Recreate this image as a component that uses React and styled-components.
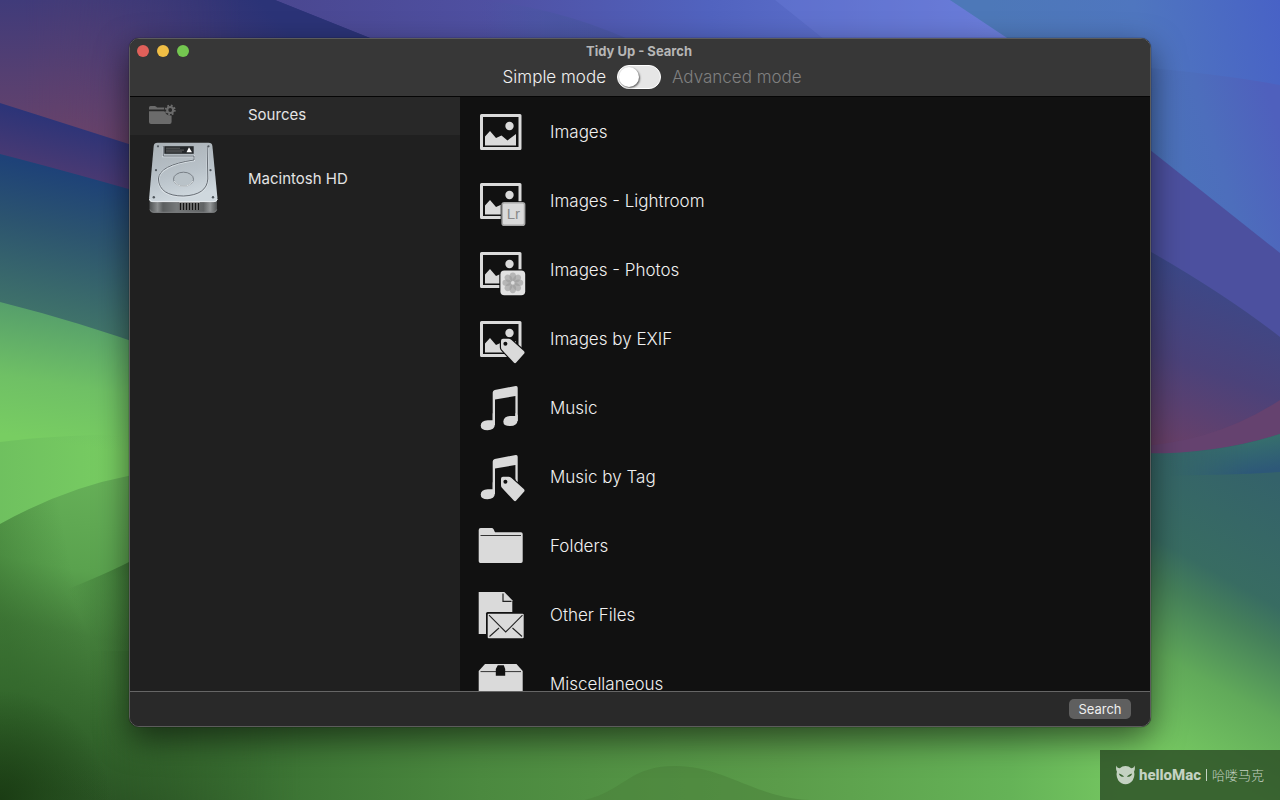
import { useState } from "react";
import styled, { createGlobalStyle } from "styled-components";

const categories = [
  { name: "Images", Icon: ImageIcon },
  { name: "Images - Lightroom", Icon: LightroomIcon },
  { name: "Images - Photos", Icon: PhotosIcon },
  { name: "Images by EXIF", Icon: ExifIcon },
  { name: "Music", Icon: MusicIcon },
  { name: "Music by Tag", Icon: MusicTagIcon },
  { name: "Folders", Icon: FolderIcon },
  { name: "Other Files", Icon: OtherFilesIcon },
  { name: "Miscellaneous", Icon: BoxIcon },
];

const App = () => {
  const [advanced, setAdvanced] = useState(false);
  return (
    <>
      <GlobalStyle />
      <Desktop>
        <Wallpaper />
        <Window>
          <TitleBar>
            <Lights>
              <Light $color="#e0605a" aria-label="Close" />
              <Light $color="#f0be45" aria-label="Minimize" />
              <Light $color="#74c750" aria-label="Zoom" />
            </Lights>
            <Title>Tidy Up - Search</Title>
            <ModeBar>
              <ModeLabel htmlFor="mode" $active={!advanced} $end>
                Simple mode
              </ModeLabel>
              <Switch
                id="mode"
                type="checkbox"
                role="switch"
                checked={advanced}
                onChange={(e) => setAdvanced(e.target.checked)}
              />
              <ModeLabel htmlFor="mode" $active={advanced}>
                Advanced mode
              </ModeLabel>
            </ModeBar>
          </TitleBar>
          <Content>
            <Sidebar>
              <SidebarHeader>
                <FolderGearIcon />
                <h2>Sources</h2>
              </SidebarHeader>
              <Source>
                <DriveIcon />
                <span>Macintosh HD</span>
              </Source>
            </Sidebar>
            <CategoryList>
              {categories.map(({ name, Icon }) => (
                <Category key={name}>
                  <Icon />
                  <span>{name}</span>
                </Category>
              ))}
            </CategoryList>
          </Content>
          <Footer>
            <SearchButton type="button">Search</SearchButton>
          </Footer>
        </Window>
        <Watermark>
          <MaskLogo />
          <Brand>helloMac</Brand>
          <Divider />
          <BrandCn lang="zh-CN">哈喽马克</BrandCn>
        </Watermark>
      </Desktop>
    </>
  );
};

function Glyph({ children }) {
  return (
    <GlyphSvg viewBox="0 0 49 49" aria-hidden="true">
      {children}
    </GlyphSvg>
  );
}

function Picture() {
  return (
    <>
      <rect x="3.5" y="8.5" width="38.5" height="33" fill="none" stroke="#dadada" strokeWidth="3" strokeLinejoin="round" />
      <circle cx="31.5" cy="19" r="4.2" />
      <path d="M7 38.5V29.5L12 24L18 31L23.5 28.5L29.5 33.5L38 27V38.5Z" />
    </>
  );
}

function Tag() {
  return (
    <>
      <path
        d="M25 24.7H30.5Q32 24.7 33.2 25.8L45.8 37Q47.2 38.3 46 39.7L38.2 48.6Q37 49.8 35.8 48.5L23.9 35.8Q23 34.8 23 33.3V26.7Q23 24.7 25 24.7Z"
        stroke="#111"
        strokeWidth="2.4"
        paintOrder="stroke"
      />
      <circle cx="27.4" cy="29.8" r="2" fill="#111" />
    </>
  );
}

function Notes() {
  return (
    <>
      <path d="M14.7 9.5Q14.7 7.5 16.7 7L37.7 3Q39.7 2.7 39.7 4.7V38H37.4V13L17 16.6V42H14.7Z" />
      <path d="M17 36V41Q16.6 47.2 9.5 47.2Q2.7 47 2.7 42.4Q3 37.5 9.7 37.2H14.7V30Z" />
      <path d="M39.7 32V37Q39.3 43 32 43Q25.3 43 25.3 38.4Q25.8 33.3 32.3 33H37.4V30Z" />
    </>
  );
}

function ImageIcon() {
  return (
    <Glyph>
      <Picture />
    </Glyph>
  );
}

function LightroomIcon() {
  return (
    <Glyph>
      <Picture />
      <rect x="22.7" y="25.3" width="25.6" height="25.6" rx="3" fill="#111" />
      <rect x="24.2" y="26.8" width="22.4" height="22.4" rx="2" stroke="#a6a6a6" strokeWidth="1.6" />
      <text x="35.4" y="43.4" textAnchor="middle" fontFamily="'Liberation Sans', sans-serif" fontSize="15" fill="#8a8a8a">
        Lr
      </text>
    </Glyph>
  );
}

function PhotosIcon() {
  return (
    <Glyph>
      <Picture />
      <rect x="21.3" y="24.3" width="27" height="27" rx="4.5" fill="#111" />
      <rect x="22.4" y="25.4" width="24.8" height="24.8" rx="4" fill="#e2e2e2" />
      {[0, 45, 90, 135, 180, 225, 270, 315].map((angle) => (
        <ellipse
          key={angle}
          cx="34.8"
          cy="31.8"
          rx="3.3"
          ry="4.4"
          fill="#999"
          fillOpacity="0.6"
          transform={`rotate(${angle} 34.8 37.8)`}
        />
      ))}
      <circle cx="34.8" cy="37.8" r="1.2" fill="#ddd" />
    </Glyph>
  );
}

function ExifIcon() {
  return (
    <Glyph>
      <Picture />
      <Tag />
    </Glyph>
  );
}

function MusicIcon() {
  return (
    <Glyph>
      <Notes />
    </Glyph>
  );
}

function MusicTagIcon() {
  return (
    <Glyph>
      <Notes />
      <rect x="21.8" y="27" width="15.6" height="18" fill="#111" />
      <Tag />
    </Glyph>
  );
}

function FolderIcon() {
  return (
    <Glyph>
      <path d="M.7 9Q.7 7 2.7 7H13.6Q15 7 15.6 8.2L17 11.2H43Q44.7 11.2 44.7 13V40.3Q44.7 42 43 42H2.4Q.7 42 .7 40.3Z" />
      <path d="M2.5 14.5H43" stroke="#333" />
    </Glyph>
  );
}

function OtherFilesIcon() {
  return (
    <Glyph>
      <path d="M.7 2H26.3L34.3 10.2V44H.7Z" />
      <path d="M25 3.5V11.4H33.5" fill="none" stroke="#222" strokeWidth="1.2" />
      <rect x="8" y="22" width="39" height="28" rx="1.5" fill="#111" />
      <rect x="9.7" y="23.7" width="36" height="24.5" rx="1" />
      <path d="M11 25.2L27.7 42L44.5 25.2M11.5 46.5L21 38M44 46.5L34.5 38" fill="none" stroke="#222" strokeWidth="1.1" />
    </Glyph>
  );
}

function BoxIcon() {
  return (
    <Glyph>
      <path d="M7 5H38.5L44.7 12V45H.7V12Z" />
      <path d="M2.5 12.6H43" stroke="#333" />
      <path d="M19.8 6.2H25.8L27.2 10V16.7H17.8V10Z" fill="#111" />
    </Glyph>
  );
}

function FolderGearIcon() {
  return (
    <svg width="28" height="22" viewBox="0 0 28 22" aria-hidden="true">
      <g fill="#6b6b6b">
        <path d="M1 5.5V3.5Q1 2 2.5 2H6.5Q7.6 2 8.4 2.8L9 3.5H16.4Q16 4.5 16 5.5Z" />
        <path d="M1 7.2H16.4Q18 11.6 23.6 11.4V18Q23.6 20 21.6 20H3Q1 20 1 18Z" />
      </g>
      <circle cx="22.2" cy="6" r="3" fill="none" stroke="#6b6b6b" strokeWidth="2.2" />
      <circle cx="22.2" cy="6" r="4.5" fill="none" stroke="#6b6b6b" strokeWidth="2" strokeDasharray="1.77 1.77" />
    </svg>
  );
}

function DriveIcon() {
  return (
    <svg width="70" height="74" viewBox="0 0 70 74" aria-hidden="true">
      <defs>
        <linearGradient id="plate" x1="0" y1="0" x2="0.3" y2="1">
          <stop offset="0" stopColor="#a9b0b5" />
          <stop offset="0.6" stopColor="#b9c2c9" />
          <stop offset="1" stopColor="#cfd8de" />
        </linearGradient>
        <linearGradient id="base" x1="0" x2="1">
          <stop offset="0" stopColor="#4d5051" />
          <stop offset="0.12" stopColor="#8b8e8f" />
          <stop offset="0.2" stopColor="#5a5d5e" />
          <stop offset="0.4" stopColor="#757879" />
          <stop offset="0.8" stopColor="#606364" />
          <stop offset="0.9" stopColor="#939697" />
          <stop offset="1" stopColor="#4d5051" />
        </linearGradient>
      </defs>
      <path d="M1.5 57H69V66.5Q69 70.8 65 70.8H5.5Q1.5 70.8 1.5 66.5Z" fill="url(#base)" />
      <path d="M2 67.5Q3 70.3 6 70.3H64.5Q68 70.3 68.7 67.5" fill="none" stroke="#7c7f80" />
      <path d="M31 60H52V68H31Z" fill="#959696" />
      <path d="M32.5 61V68M35.5 61V68M38.5 61V68M41.5 61V68M44.5 61V68M47.5 61V68M50.5 61V68" stroke="#141414" strokeWidth="1.7" />
      <path
        d="M9.5 .8H60.5Q64 .8 64.4 4L69.4 55.5Q69.8 60 66 60H4.5Q.9 60 1.2 55.5L5.7 4Q6 .8 9.5 .8Z"
        fill="url(#plate)"
      />
      <path d="M1.4 57Q2 59.6 4.6 59.6H66Q69 59.4 69.3 57" fill="none" stroke="#e6ebee" />
      <path
        d="M15.3 4.5V14.3H46V18.2Q11 23.5 10.4 37.5Q11.5 54.7 35.5 54.7Q58.8 53.5 59.8 38L59.2 4"
        fill="none"
        stroke="#d9e0e5"
        strokeWidth="2"
      />
      <path
        d="M15.3 4V14H46V18Q11 23 10.4 37Q11.5 54 35.5 54Q58.8 53 59.8 37L59.2 4"
        fill="none"
        stroke="#596068"
        strokeWidth="0.9"
      />
      <ellipse cx="35.5" cy="37.2" rx="10" ry="7" fill="#b9c2c8" stroke="#70777e" strokeWidth="0.9" />
      <path d="M26 39Q29 44.3 35.5 44.2Q42 44.1 45 39" fill="none" stroke="#edf1f3" strokeWidth="0.8" />
      <rect x="16.3" y="4.2" width="29.4" height="7.6" fill="#24272a" />
      <path d="M18 6.2H32M18 8.1H36M18 9.9H34" stroke="#777" strokeWidth="0.7" />
      <path d="M38.5 10.3L41 5.3L44 10.3Z" fill="#fff" />
      <g fill="#50575d">
        <circle cx="10" cy="4.3" r="1.1" />
        <circle cx="60.5" cy="4.3" r="1.1" />
        <circle cx="8" cy="28.2" r="1.1" />
        <circle cx="62.5" cy="28.2" r="1.1" />
        <circle cx="5.8" cy="55.2" r="1.2" />
        <circle cx="65" cy="55.2" r="1.2" />
      </g>
    </svg>
  );
}

function MaskLogo() {
  return (
    <svg width="20" height="20" viewBox="0 0 20 20" aria-hidden="true">
      <path
        d="M.5 0Q.8 2.6 4 2.8Q6.5.4 10 .4Q13.5.4 16 2.8Q19.2 2.6 19.5 0Q20.6 3.8 19 6.5Q20.3 11 17.7 15.5Q14.5 19.8 10 19.8Q5.5 19.8 2.3 15.5Q-.3 11 1 6.5Q-.6 3.8 .5 0ZM3 8.3Q3.8 12 8.4 11.9Q8 10 3 8.3ZM17 8.3Q12 10 11.6 11.9Q16.2 12 17 8.3Z"
        fill="#c4d2c2"
        fillRule="evenodd"
      />
    </svg>
  );
}

function Wallpaper() {
  return (
    <Backdrop viewBox="0 0 1280 800" preserveAspectRatio="none" aria-hidden="true">
      <defs>
        <linearGradient id="sky" gradientUnits="userSpaceOnUse" x1="275" y1="0" x2="1000" y2="0">
          <stop offset="0" stopColor="#4a4790" />
          <stop offset="0.3" stopColor="#4f50a2" />
          <stop offset="0.6" stopColor="#5163bf" />
          <stop offset="1" stopColor="#687bd8" />
        </linearGradient>
        <linearGradient id="haze" gradientUnits="userSpaceOnUse" x1="480" y1="0" x2="560" y2="0">
          <stop offset="0" stopColor="#4856a0" stopOpacity="0" />
          <stop offset="1" stopColor="#4856a0" stopOpacity="0.6" />
        </linearGradient>
        <linearGradient id="skyRight" gradientUnits="userSpaceOnUse" x1="1000" y1="60" x2="1280" y2="0">
          <stop offset="0" stopColor="#4d78b8" />
          <stop offset="0.5" stopColor="#4f76bf" />
          <stop offset="1" stopColor="#4862c6" />
        </linearGradient>
        <linearGradient id="skyLow" gradientUnits="userSpaceOnUse" x1="1150" y1="170" x2="1280" y2="130">
          <stop offset="0" stopColor="#4b74ba" />
          <stop offset="0.5" stopColor="#4d6ebc" />
          <stop offset="1" stopColor="#4f60bd" />
        </linearGradient>
        <linearGradient id="dusk" gradientUnits="userSpaceOnUse" x1="250" y1="-10" x2="90" y2="140">
          <stop offset="0" stopColor="#2b3377" />
          <stop offset="0.45" stopColor="#403975" />
          <stop offset="1" stopColor="#6b4268" />
        </linearGradient>
        <linearGradient id="duskLeft" x1="0" y1="0" x2="0" y2="1">
          <stop offset="0" stopColor="#403b7a" />
          <stop offset="1" stopColor="#6d4468" />
        </linearGradient>
        <linearGradient id="fade" x1="0" x2="1">
          <stop offset="0.1" stopColor="#fff" />
          <stop offset="1" stopColor="#000" />
        </linearGradient>
        <mask id="leftMask">
          <rect width="240" height="160" fill="url(#fade)" />
        </mask>
        <linearGradient id="hillFade" gradientUnits="userSpaceOnUse" x1="90" y1="0" x2="300" y2="0">
          <stop offset="0" stopColor="#fff" />
          <stop offset="1" stopColor="#000" />
        </linearGradient>
        <mask id="hillMask">
          <rect width="420" height="800" fill="url(#hillFade)" />
        </mask>
        <linearGradient id="violet" gradientUnits="userSpaceOnUse" x1="30" y1="112" x2="12" y2="190">
          <stop offset="0" stopColor="#2c3478" />
          <stop offset="1" stopColor="#5a3d70" />
        </linearGradient>
        <linearGradient id="lake" gradientUnits="userSpaceOnUse" x1="60" y1="170" x2="30" y2="315">
          <stop offset="0" stopColor="#1e4278" />
          <stop offset="0.4" stopColor="#2c546f" />
          <stop offset="1" stopColor="#40736a" />
        </linearGradient>
        <linearGradient id="meadow" gradientUnits="userSpaceOnUse" x1="60" y1="312" x2="40" y2="440">
          <stop offset="0" stopColor="#569f6b" />
          <stop offset="0.55" stopColor="#6fc065" />
          <stop offset="1" stopColor="#78cd62" />
        </linearGradient>
        <linearGradient id="lawn" gradientUnits="userSpaceOnUse" x1="0" y1="0" x2="120" y2="0">
          <stop offset="0" stopColor="#66b45c" stopOpacity="0.5" />
          <stop offset="1" stopColor="#66b45c" stopOpacity="0" />
        </linearGradient>
        <linearGradient id="hill" gradientUnits="userSpaceOnUse" x1="110" y1="480" x2="50" y2="790">
          <stop offset="0" stopColor="#66b058" />
          <stop offset="0.3" stopColor="#5aa24e" />
          <stop offset="0.5" stopColor="#447e3b" />
          <stop offset="0.8" stopColor="#33652c" />
          <stop offset="1" stopColor="#2a5324" />
        </linearGradient>
        <linearGradient id="hillEdge" gradientUnits="userSpaceOnUse" x1="0" y1="600" x2="75" y2="585">
          <stop offset="0" stopColor="#2f6428" stopOpacity="0.4" />
          <stop offset="1" stopColor="#2f6428" stopOpacity="0" />
        </linearGradient>
        <linearGradient id="fold" gradientUnits="userSpaceOnUse" x1="145" y1="570" x2="75" y2="605">
          <stop offset="0" stopColor="#2c5c28" stopOpacity="0.7" />
          <stop offset="1" stopColor="#2c5c28" stopOpacity="0" />
        </linearGradient>
        <radialGradient id="corner" gradientUnits="userSpaceOnUse" cx="0" cy="800" r="110">
          <stop offset="0" stopColor="#16350f" stopOpacity="0.8" />
          <stop offset="1" stopColor="#16350f" stopOpacity="0" />
        </radialGradient>
        <linearGradient id="ground" gradientUnits="userSpaceOnUse" x1="130" y1="0" x2="1130" y2="0">
          <stop offset="0" stopColor="#305e29" />
          <stop offset="0.15" stopColor="#3c7434" />
          <stop offset="0.35" stopColor="#4b893f" />
          <stop offset="0.65" stopColor="#5b9c4a" />
          <stop offset="0.88" stopColor="#65b357" />
          <stop offset="1" stopColor="#75c761" />
        </linearGradient>
        <linearGradient id="plum" gradientUnits="userSpaceOnUse" x1="1230" y1="285" x2="1170" y2="450">
          <stop offset="0" stopColor="#3c4888" />
          <stop offset="0.5" stopColor="#4b427a" />
          <stop offset="1" stopColor="#6a4068" />
        </linearGradient>
        <linearGradient id="cove" gradientUnits="userSpaceOnUse" x1="1240" y1="440" x2="1246" y2="474">
          <stop offset="0" stopColor="#37706c" />
          <stop offset="1" stopColor="#2d5878" />
        </linearGradient>
        <linearGradient id="coveFade" gradientUnits="userSpaceOnUse" x1="1170" y1="0" x2="1250" y2="0">
          <stop offset="0" stopColor="#000" />
          <stop offset="1" stopColor="#fff" />
        </linearGradient>
        <mask id="coveMask">
          <rect x="1130" y="400" width="150" height="100" fill="url(#coveFade)" />
        </mask>
        <linearGradient id="shore" gradientUnits="userSpaceOnUse" x1="1242" y1="460" x2="1100" y2="715">
          <stop offset="0" stopColor="#34626a" />
          <stop offset="0.38" stopColor="#386c62" />
          <stop offset="0.5" stopColor="#45805a" />
          <stop offset="0.72" stopColor="#61aa5a" />
          <stop offset="1" stopColor="#75c761" />
        </linearGradient>
      </defs>
      <rect width="1280" height="800" fill="url(#sky)" />
      <path d="M480 0Q580 10 670 60H450V0Z" fill="url(#haze)" />
      <path d="M775 0L850 60H1050L950 0Z" fill="#6f80dd" fillOpacity="0.3" />
      <path d="M950 0H1280V200H1130L1040 60Z" fill="url(#skyRight)" />
      <path d="M1130 66Q1220 74 1280 85V280H1130Z" fill="url(#skyLow)" />
      <path d="M0 0H275L400 50V160H0Z" fill="#2c347a" />
      <path d="M0 0H275L400 50V160H0Z" fill="url(#dusk)" />
      <path d="M0 0H240V160H0Z" fill="url(#duskLeft)" mask="url(#leftMask)" />
      <path d="M0 103Q60 122 160 154V200H0Z" fill="url(#violet)" />
      <path d="M0 154Q70 172 160 198V360H0Z" fill="url(#lake)" />
      <path d="M0 302Q80 322 160 351V650H0Z" fill="url(#meadow)" />
      <path d="M0 442Q60 434 160 434V490L0 524Z" fill="url(#lawn)" />
      <rect y="650" width="1131" height="150" fill="url(#ground)" />
      <path d="M0 524Q65 488 128 476L160 470V651H0Z" fill="url(#hill)" />
      <g mask="url(#hillMask)">
        <path d="M0 650H420V800H0Z" fill="url(#hill)" />
      </g>
      <path d="M0 524Q65 488 128 476V800H0Z" fill="url(#hillEdge)" />
      <path d="M40 600Q100 577 129 562V727H40Z" fill="url(#fold)" />
      <rect y="680" width="120" height="120" fill="url(#corner)" />
      <path d="M585 800C625 790 630 766 675 766C725 766 755 798 810 800Z" fill="#498039" fillOpacity="0.5" />
      <path d="M1130 134L1280 253V350H1130Z" fill="#4c509f" />
      <path d="M1130 240Q1220 290 1280 337V460H1130Z" fill="url(#plum)" />
      <path d="M1130 447Q1215 443 1280 400V470H1130Z" fill="#65426f" />
      <path d="M1130 453Q1210 456 1280 434V800H1130Z" fill="url(#shore)" />
      <path d="M1150 454Q1220 454 1280 434V472Q1220 476 1150 475Z" fill="url(#cove)" mask="url(#coveMask)" />
    </Backdrop>
  );
}

const GlobalStyle = createGlobalStyle`
  * {
    box-sizing: border-box;
    margin: 0;
    padding: 0;
  }
  body {
    font-family: Inter, "Liberation Sans", sans-serif;
    color: #e4e4e4;
    background: #3a702e;
  }
`;
const Desktop = styled.div`
  position: relative;
  height: 100vh;
  display: flex;
  padding: 38px 129px 73px;
  overflow: hidden;
`;
const Backdrop = styled.svg`
  position: absolute;
  inset: 0;
  width: 100%;
  height: 100%;
`;
const Window = styled.main`
  position: relative;
  flex: 1;
  min-width: 0;
  display: flex;
  flex-direction: column;
  border: 1px solid #5c5c5c;
  border-radius: 10px;
  background: #292929;
  overflow: hidden;
  box-shadow:
    0 0 1px #000,
    0 12px 32px rgba(0, 0, 0, 0.55);
`;
const TitleBar = styled.header`
  height: 58px;
  flex: none;
  display: grid;
  grid-template-columns: 1fr auto 1fr;
  grid-template-rows: 24px 28px;
  align-items: center;
  padding-right: 2px;
  background: #373737;
  border-bottom: 1px solid #050505;
`;
const Lights = styled.div`
  display: flex;
  gap: 8px;
  padding-left: 7px;
`;
const Light = styled.button`
  width: 12px;
  height: 12px;
  border: none;
  border-radius: 50%;
  background: ${({ $color }) => $color};
`;
const Title = styled.h1`
  font-size: 13px;
  line-height: 16px;
  font-weight: 700;
  color: #b6b6b6;
`;
const ModeBar = styled.div`
  grid-column: 1 / -1;
  display: grid;
  grid-template-columns: 1fr auto 1fr;
  align-items: center;
  gap: 11px;
`;
const ModeLabel = styled.label`
  font-size: 17px;
  line-height: 24px;
  font-weight: 300;
  text-align: ${({ $end }) => ($end ? "right" : "left")};
  color: ${({ $active }) => ($active ? "#f0f0f0" : "#808080")};
`;
const Switch = styled.input`
  appearance: none;
  width: 44px;
  height: 24px;
  padding: 1px;
  border-radius: 12px;
  border: 1px solid #fff;
  background: #e6e6e6;
  &::before {
    content: "";
    display: block;
    width: 20px;
    height: 20px;
    border-radius: 50%;
    background: #fff;
    box-shadow: 1px 1px 2px rgba(0, 0, 0, 0.6);
  }
  &:checked::before {
    margin-left: auto;
  }
`;
const Content = styled.div`
  flex: 1;
  min-height: 0;
  display: flex;
`;
const Sidebar = styled.aside`
  width: 330px;
  flex: none;
  background: #202020;
`;
const SidebarRow = styled.div`
  display: grid;
  grid-template-columns: 100px 1fr;
  align-items: center;
  padding-left: 18px;
  font-size: 15px;
  line-height: 20px;
`;
const SidebarHeader = styled(SidebarRow)`
  height: 38px;
  padding-bottom: 2px;
  background: #282828;
  h2 {
    font-size: 15px;
    font-weight: 400;
  }
`;
const Source = styled(SidebarRow)`
  height: 88px;
`;
const CategoryList = styled.ul`
  flex: 1;
  list-style: none;
  background: #111;
  overflow: hidden;
`;
const Category = styled.li`
  height: 69px;
  display: flex;
  align-items: center;
  gap: 23px;
  padding-left: 18px;
  font-size: 17px;
  line-height: 24px;
  font-weight: 300;
  color: #f0f0f0;
`;
const GlyphSvg = styled.svg`
  width: 49px;
  height: 49px;
  flex: none;
  overflow: visible;
  fill: #dadada;
`;
const Footer = styled.footer`
  height: 35px;
  flex: none;
  display: flex;
  align-items: center;
  justify-content: flex-end;
  padding-right: 19px;
  border-top: 1px solid #666;
  background: #292929;
`;
const SearchButton = styled.button`
  width: 62px;
  height: 20px;
  border: none;
  border-radius: 5px;
  background: #5f5f5f;
  color: #eee;
  font-family: inherit;
  font-size: 13px;
  line-height: 20px;
`;
const Watermark = styled.div`
  position: absolute;
  right: 0;
  bottom: 0;
  width: 180px;
  height: 50px;
  display: flex;
  align-items: center;
  padding: 0 16px;
  background: rgba(42, 75, 36, 0.8);
  color: #c4d2c2;
`;
const Brand = styled.strong`
  margin-left: 4px;
  font-family: Roboto, sans-serif;
  font-size: 15px;
  line-height: 20px;
  font-weight: 800;
`;
const Divider = styled.span`
  width: 1px;
  height: 12px;
  margin: 0 5px;
  background: #c4d2c2;
`;
const BrandCn = styled.span`
  font-family: "Noto Sans CJK SC", sans-serif;
  font-size: 13px;
  line-height: 20px;
  font-weight: 300;
  white-space: nowrap;
`;

export default App;
